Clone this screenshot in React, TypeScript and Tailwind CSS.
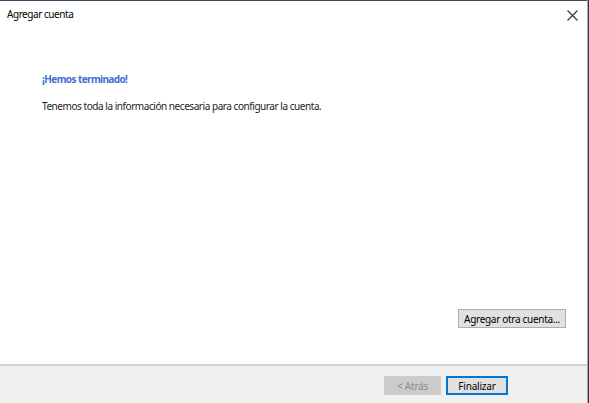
import React from 'react';

const font = { fontFamily: '"Noto Sans", "Open Sans", sans-serif' };

export default function App() {
  return (
    <div className="w-[589px] h-[403px] flex bg-white text-[#000]" style={font}>
      <div className="flex-1 flex flex-col border-t border-[#3b4d5e]">
        <div className="h-[27px] flex items-center justify-between pl-[7px] pr-[9px]">
          <span className="text-[10px] tracking-[-0.45px] text-black">Agregar cuenta</span>
          <svg width="11" height="11" viewBox="0 0 11 11" className="mt-[1px]">
            <path d="M0.5 0.5 L10.5 10.5 M10.5 0.5 L0.5 10.5" stroke="#333" strokeWidth="1.1" />
          </svg>
        </div>
        <div className="flex-1 flex flex-col pl-[42px] pr-[21px]">
          <div className="mt-[44px] text-[10px] tracking-[-0.6px] font-bold text-[#3f6fcf] leading-[14px]">¡Hemos terminado!</div>
          <div className="mt-[13px] text-[10px] tracking-[-0.45px] text-[#222] leading-[14px]">
            Tenemos toda la información necesaria para configurar la cuenta.
          </div>
          <div className="flex-1" />
          <div className="flex justify-end mb-[36px]">
            <button className="h-[19px] w-[108px] border border-[#adadad] bg-[#e1e1e1] text-[10px] tracking-[-0.3px] text-black leading-none whitespace-nowrap">
              Agregar otra cuenta...
            </button>
          </div>
        </div>
        <div className="h-[39px] bg-[#f0f0f0] border-t-2 border-[#d4d4d4] flex justify-end items-start pt-[10px] pr-[79px] gap-[5px]">
          <button className="h-[19px] w-[57px] border border-[#cccccc] bg-[#cccccc] text-[10px] tracking-[-0.2px] text-[#8a8a8a] leading-none">
            &lt; Atrás
          </button>
          <button className="h-[19px] w-[62px] border-2 border-[#0078d7] bg-[#e1e1e1] text-[10px] tracking-[-0.2px] text-black leading-none">
            Finalizar
          </button>
        </div>
      </div>
      <div className="w-[1px] bg-[#a9a9a9]" />
      <div className="w-[1px] bg-[#2b3a4a]" />
    </div>
  );
}
